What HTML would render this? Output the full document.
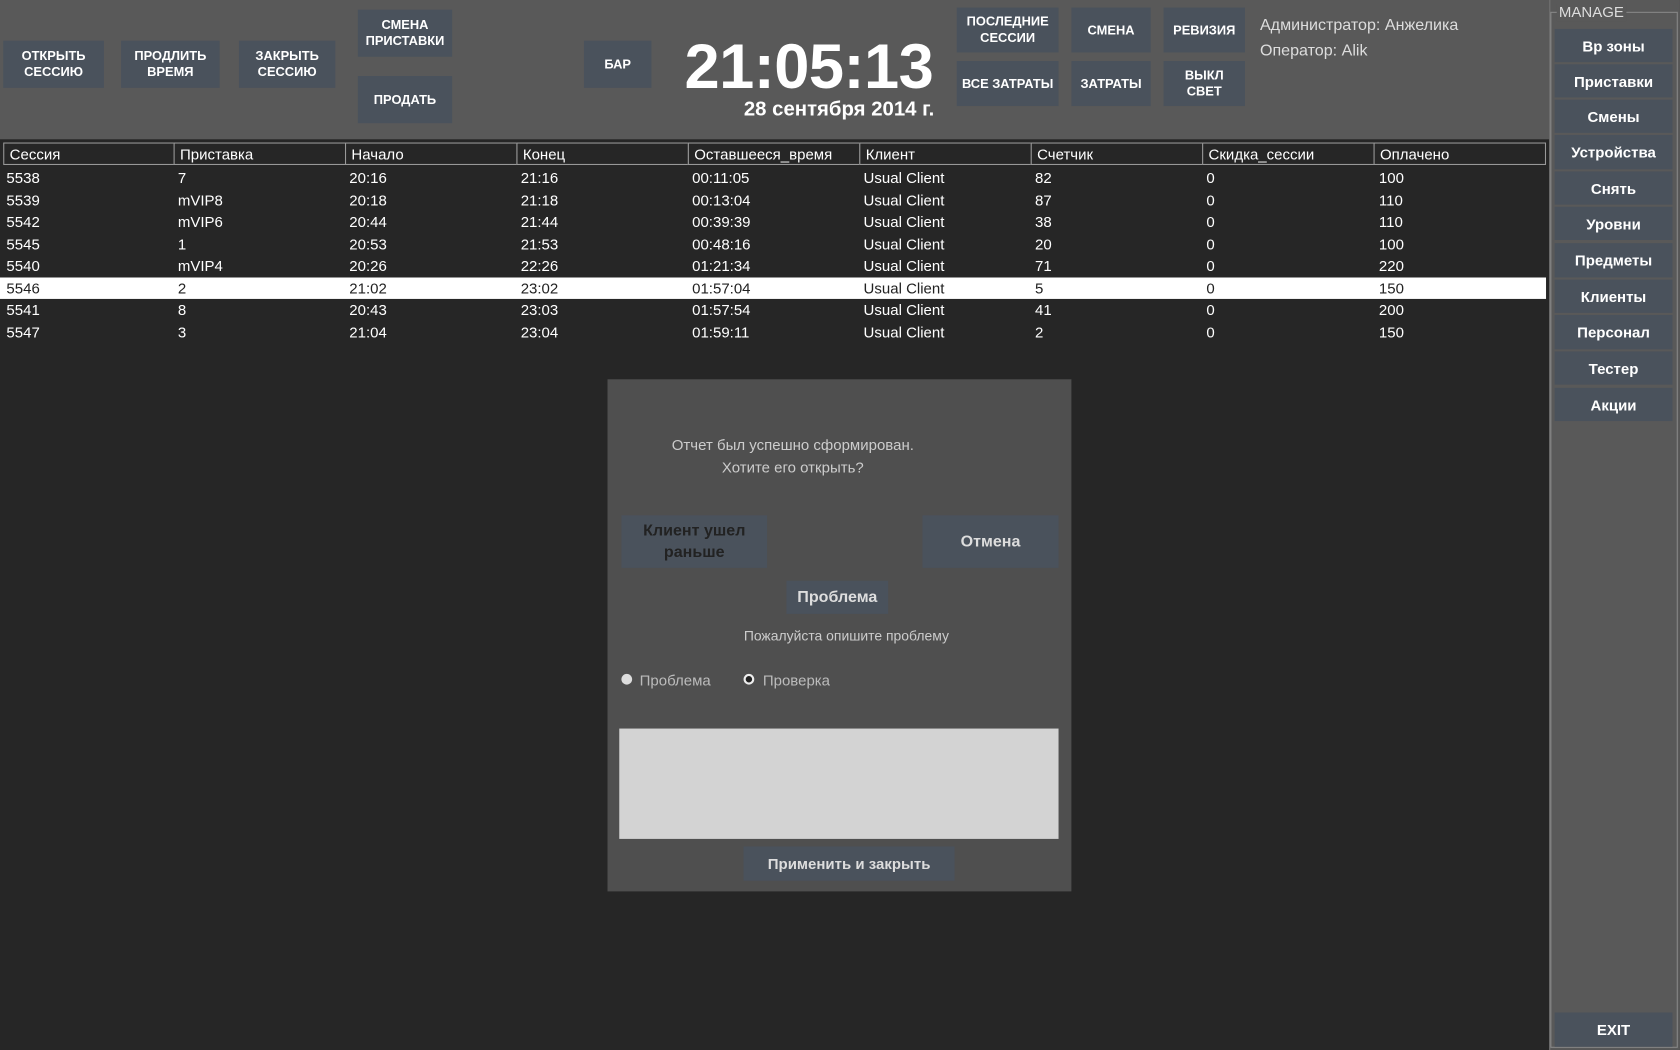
<!DOCTYPE html>
<html><head><meta charset="utf-8"><style>
html,body{margin:0;padding:0;width:1680px;height:1050px;overflow:hidden;background:#262626}
#s{position:absolute;left:0;top:0;width:1568px;height:980px;transform:scale(1.0714);transform-origin:0 0;font-family:"Liberation Sans","DejaVu Sans",sans-serif;background:#262626}
.a{position:absolute}
.b{position:absolute;background:#4a525c;color:#fff;font-weight:bold;font-size:12px;display:flex;align-items:center;justify-content:center;text-align:center;line-height:15px}
.top{position:absolute;left:0;top:0;width:1446px;height:130px;background:#595959}
.hdr{position:absolute;top:133px;height:21px;background:#262626;border:1px solid #999;box-sizing:border-box;color:#fff;font-size:14px;line-height:20px;padding-left:5px}
.row{position:absolute;left:0;width:1443px;height:20.5px;color:#fff;font-size:14px;line-height:20px}
.row span{position:absolute}
.sel{background:#fff;color:#222}
.mb{position:absolute;left:1451px;width:110px;height:31px;background:#4a525c;color:#fff;font-weight:bold;font-size:14px;display:flex;align-items:center;justify-content:center}
</style></head><body><div id="s">
<div class="top"></div>
<div class="b" style="left:3px;top:38px;width:94px;height:44px">ОТКРЫТЬ<br>СЕССИЮ</div>
<div class="b" style="left:113px;top:38px;width:92px;height:44px">ПРОДЛИТЬ<br>ВРЕМЯ</div>
<div class="b" style="left:223px;top:38px;width:90px;height:44px">ЗАКРЫТЬ<br>СЕССИЮ</div>
<div class="b" style="left:334px;top:9px;width:88px;height:44px">СМЕНА<br>ПРИСТАВКИ</div>
<div class="b" style="left:334px;top:71px;width:88px;height:44px">ПРОДАТЬ</div>
<div class="b" style="left:545px;top:38px;width:63px;height:44px">БАР</div>
<div class="a" style="left:630px;top:27px;width:250px;text-align:center;color:#fff;font-weight:bold;font-size:59px;line-height:70px;letter-spacing:-0.5px">21:05:13</div>
<div class="a" style="left:640px;top:92px;width:232px;text-align:right;color:#fff;font-weight:bold;font-size:19px;line-height:22px">28 сентября 2014 г.</div>
<div class="b" style="left:893px;top:7px;width:95px;height:42px">ПОСЛЕДНИЕ<br>СЕССИИ</div>
<div class="b" style="left:1000px;top:7px;width:74px;height:42px">СМЕНА</div>
<div class="b" style="left:1086px;top:7px;width:76px;height:42px">РЕВИЗИЯ</div>
<div class="b" style="left:893px;top:57px;width:95px;height:42px">ВСЕ ЗАТРАТЫ</div>
<div class="b" style="left:1000px;top:57px;width:74px;height:42px">ЗАТРАТЫ</div>
<div class="b" style="left:1086px;top:57px;width:76px;height:42px">ВЫКЛ<br>СВЕТ</div>
<div class="a" style="left:1176px;top:14px;color:#ddd;font-size:15px;line-height:20px">Администратор: Анжелика</div>
<div class="a" style="left:1176px;top:38px;color:#ddd;font-size:15px;line-height:20px">Оператор: Alik</div>

<div class="hdr" style="left:3px;width:160px">Сессия</div>
<div class="hdr" style="left:162px;width:161px">Приставка</div>
<div class="hdr" style="left:322px;width:161px">Начало</div>
<div class="hdr" style="left:482px;width:161px">Конец</div>
<div class="hdr" style="left:642px;width:161px">Оставшееся_время</div>
<div class="hdr" style="left:802px;width:161px">Клиент</div>
<div class="hdr" style="left:962px;width:161px">Счетчик</div>
<div class="hdr" style="left:1122px;width:161px">Скидка_сессии</div>
<div class="hdr" style="left:1282px;width:161px">Оплачено</div>

<div class="row" style="top:156px"><span style="left:6px">5538</span><span style="left:166px">7</span><span style="left:326px">20:16</span><span style="left:486px">21:16</span><span style="left:646px">00:11:05</span><span style="left:806px">Usual Client</span><span style="left:966px">82</span><span style="left:1126px">0</span><span style="left:1287px">100</span></div>
<div class="row" style="top:176.5px"><span style="left:6px">5539</span><span style="left:166px">mVIP8</span><span style="left:326px">20:18</span><span style="left:486px">21:18</span><span style="left:646px">00:13:04</span><span style="left:806px">Usual Client</span><span style="left:966px">87</span><span style="left:1126px">0</span><span style="left:1287px">110</span></div>
<div class="row" style="top:197px"><span style="left:6px">5542</span><span style="left:166px">mVIP6</span><span style="left:326px">20:44</span><span style="left:486px">21:44</span><span style="left:646px">00:39:39</span><span style="left:806px">Usual Client</span><span style="left:966px">38</span><span style="left:1126px">0</span><span style="left:1287px">110</span></div>
<div class="row" style="top:217.5px"><span style="left:6px">5545</span><span style="left:166px">1</span><span style="left:326px">20:53</span><span style="left:486px">21:53</span><span style="left:646px">00:48:16</span><span style="left:806px">Usual Client</span><span style="left:966px">20</span><span style="left:1126px">0</span><span style="left:1287px">100</span></div>
<div class="row" style="top:238px"><span style="left:6px">5540</span><span style="left:166px">mVIP4</span><span style="left:326px">20:26</span><span style="left:486px">22:26</span><span style="left:646px">01:21:34</span><span style="left:806px">Usual Client</span><span style="left:966px">71</span><span style="left:1126px">0</span><span style="left:1287px">220</span></div>
<div class="row sel" style="top:258.5px"><span style="left:6px">5546</span><span style="left:166px">2</span><span style="left:326px">21:02</span><span style="left:486px">23:02</span><span style="left:646px">01:57:04</span><span style="left:806px">Usual Client</span><span style="left:966px">5</span><span style="left:1126px">0</span><span style="left:1287px">150</span></div>
<div class="row" style="top:279px"><span style="left:6px">5541</span><span style="left:166px">8</span><span style="left:326px">20:43</span><span style="left:486px">23:03</span><span style="left:646px">01:57:54</span><span style="left:806px">Usual Client</span><span style="left:966px">41</span><span style="left:1126px">0</span><span style="left:1287px">200</span></div>
<div class="row" style="top:299.5px"><span style="left:6px">5547</span><span style="left:166px">3</span><span style="left:326px">21:04</span><span style="left:486px">23:04</span><span style="left:646px">01:59:11</span><span style="left:806px">Usual Client</span><span style="left:966px">2</span><span style="left:1126px">0</span><span style="left:1287px">150</span></div>

<div class="a" style="left:567px;top:354px;width:433px;height:478px;background:#4f4f4f"></div>
<div class="a" style="left:567px;top:405px;width:346px;text-align:center;color:#ccc;font-size:14px;line-height:21px">Отчет был успешно сформирован.<br>Хотите его открыть?</div>
<div class="b" style="left:580px;top:481px;width:136px;height:49px;color:#222;font-size:15px;line-height:20px">Клиент ушел<br>раньше</div>
<div class="b" style="left:861px;top:481px;width:127px;height:49px;color:#ddd;font-size:15px">Отмена</div>
<div class="b" style="left:734px;top:542px;width:95px;height:31px;color:#ddd;font-size:15px">Проблема</div>
<div class="a" style="left:640px;top:585px;width:300px;text-align:center;color:#ccc;font-size:13px;line-height:18px">Пожалуйста опишите проблему</div>
<div class="a" style="left:580px;top:629px;width:10px;height:10px;border-radius:50%;background:#ddd"></div>
<div class="a" style="left:597px;top:625px;color:#bbb;font-size:14px;line-height:20px">Проблема</div>
<div class="a" style="left:694px;top:629px;width:6px;height:6px;border-radius:50%;background:#222;border:2px solid #eee"></div>
<div class="a" style="left:712px;top:625px;color:#bbb;font-size:14px;line-height:20px">Проверка</div>
<div class="a" style="left:578px;top:680px;width:410px;height:103px;background:#d3d3d3"></div>
<div class="b" style="left:694px;top:790px;width:197px;height:32px;color:#ddd;font-size:14px">Применить и закрыть</div>

<div class="a" style="left:1446px;top:0;width:122px;height:980px;background:#595959;border-left:1px solid #777;box-sizing:border-box"></div>
<div class="a" style="left:1447px;top:11px;width:119px;height:967px;border:1px solid #888;box-sizing:border-box"></div>
<div class="a" style="left:1453px;top:3px;padding:0 2px;background:#595959;color:#ddd;font-size:14px;line-height:17px">MANAGE</div>
<div class="mb" style="top:27px">Вр зоны</div>
<div class="mb" style="top:60px">Приставки</div>
<div class="mb" style="top:93px">Смены</div>
<div class="mb" style="top:126px;height:32px">Устройства</div>
<div class="mb" style="top:160px">Снять</div>
<div class="mb" style="top:193px">Уровни</div>
<div class="mb" style="top:227px;height:32px">Предметы</div>
<div class="mb" style="top:261px">Клиенты</div>
<div class="mb" style="top:294px;height:32px">Персонал</div>
<div class="mb" style="top:328px">Тестер</div>
<div class="mb" style="top:362px">Акции</div>
<div class="mb" style="top:945px;height:32px">EXIT</div>
</div></body></html>
